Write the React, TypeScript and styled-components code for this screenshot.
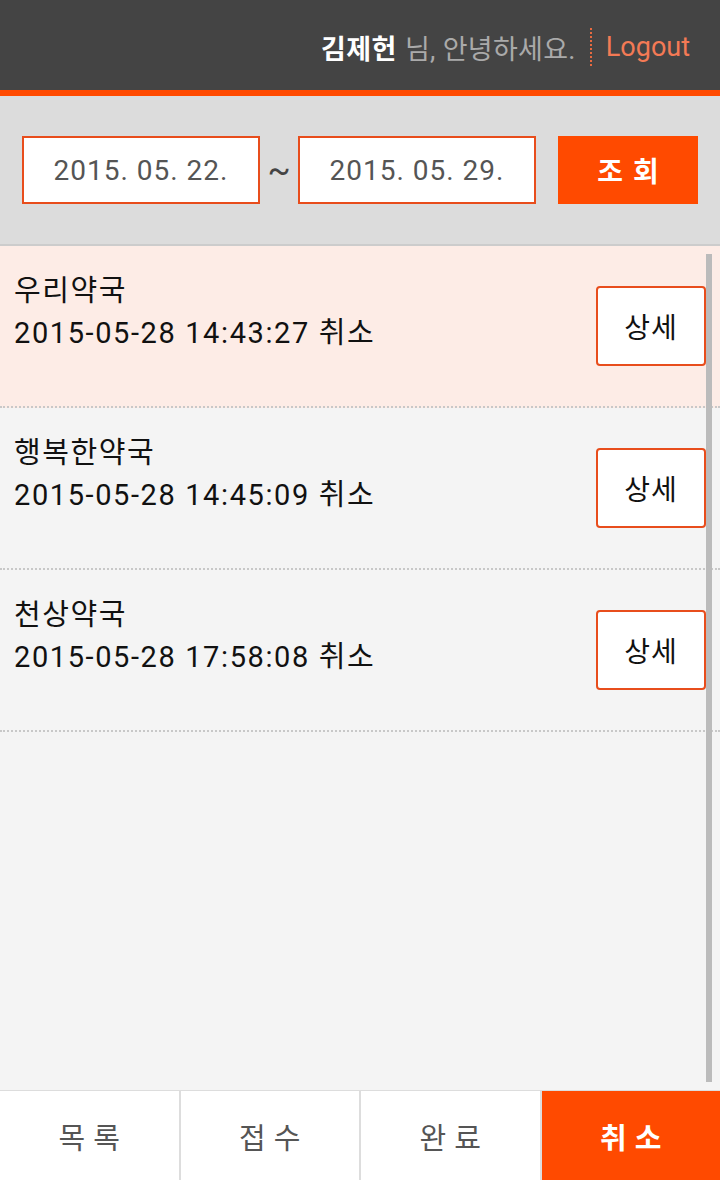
import styled, { createGlobalStyle } from 'styled-components'

const GlobalStyle = createGlobalStyle`
    html, body {
        margin: 0;
        padding: 0;
        background: #f4f4f4;
    }
    body {
        font-family: Roboto, "Noto Sans CJK KR", sans-serif;
    }
`

const ORANGE = '#ff4a00'

const Page = styled.div`
    display: flex;
    flex-direction: column;
    width: 720px;
    height: 1180px;
    overflow: hidden;
`

const Header = styled.header`
    box-sizing: border-box;
    display: flex;
    align-items: center;
    justify-content: flex-end;
    height: 90px;
    padding: 4px 30px 0 0;
    background: #444;
    border-bottom: 6px solid ${ORANGE};
    font-size: 27px;
    height: 96px;
`

const UserName = styled.b`
    color: #fff;
    font-weight: 700;
    letter-spacing: 0.5px;
`

const Greeting = styled.span`
    color: #aaa;
    margin-left: 8px;
    letter-spacing: 0.3px;
`

const Divider = styled.span`
    width: 0;
    height: 38px;
    margin: 0 14px;
    border-left: 2px dotted #e86a40;
`

const Logout = styled.a`
    color: #f47a55;
    font-size: 27px;
    text-decoration: none;
`

const SearchBar = styled.div`
    display: flex;
    align-items: center;
    padding: 40px 22px;
    background: #dcdcdc;
    border-bottom: 2px solid #ccc;
`

const DateInput = styled.div`
    box-sizing: border-box;
    display: flex;
    align-items: center;
    justify-content: center;
    width: 238px;
    height: 68px;
    background: #fff;
    border: 2px solid #e84d1c;
    color: #555;
    font-size: 28px;
    letter-spacing: 1px;
`

const Tilde = styled.span`
    width: 38px;
    text-align: center;
    color: #444;
    font-size: 34px;
`

const SearchButton = styled.button`
    width: 140px;
    height: 68px;
    margin-left: 22px;
    border: none;
    background: ${ORANGE};
    color: #fff;
    font-family: inherit;
    font-size: 28px;
    font-weight: 700;
    letter-spacing: 10px;
    text-indent: 10px;
`

const List = styled.div`
    position: relative;
    flex: 1;
    background: #f4f4f4;
`

const Row = styled.div<{ $active?: boolean }>`
    display: flex;
    align-items: center;
    justify-content: space-between;
    height: 160px;
    padding: 0 14px;
    background: ${p => (p.$active ? '#fdece6' : '#f4f4f4')};
    border-bottom: 2px dotted #c8c8c8;
`

const Info = styled.div`
    align-self: flex-start;
    padding-top: 24px;
    color: #111;
    font-size: 29px;
    line-height: 42px;
    letter-spacing: 1.6px;
`

const DetailButton = styled.button`
    box-sizing: border-box;
    width: 110px;
    height: 80px;
    background: #fff;
    border: 2px solid #e84d1c;
    border-radius: 4px;
    color: #111;
    font-family: inherit;
    font-size: 28px;
    letter-spacing: 1px;
`

const Scrollbar = styled.div`
    position: absolute;
    top: 8px;
    bottom: 8px;
    right: 8px;
    width: 6px;
    background: #bbb;
`

const TabBar = styled.nav`
    display: flex;
    height: 89px;
    border-top: 1px solid #ddd;
    background: #fff;
`

const Tab = styled.div<{ $active?: boolean }>`
    flex: 1;
    display: flex;
    align-items: center;
    justify-content: center;
    border-left: 2px solid #ddd;
    background: ${p => (p.$active ? ORANGE : '#fff')};
    color: ${p => (p.$active ? '#fff' : '#555')};
    font-size: 29px;
    font-weight: ${p => (p.$active ? 700 : 400)};
    letter-spacing: 8px;
    text-indent: 8px;
    &:first-child {
        border-left: none;
    }
`

const items = [
    { name: '우리약국', time: '2015-05-28 14:43:27 취소' },
    { name: '행복한약국', time: '2015-05-28 14:45:09 취소' },
    { name: '천상약국', time: '2015-05-28 17:58:08 취소' },
]

const tabs = ['목록', '접수', '완료', '취소']

const App = () => {
    return (
        <Page>
            <GlobalStyle />
            <Header>
                <UserName>김제헌</UserName>
                <Greeting>님, 안녕하세요.</Greeting>
                <Divider />
                <Logout>Logout</Logout>
            </Header>
            <SearchBar>
                <DateInput>2015. 05. 22.</DateInput>
                <Tilde>~</Tilde>
                <DateInput>2015. 05. 29.</DateInput>
                <SearchButton>조회</SearchButton>
            </SearchBar>
            <List>
                {items.map((item, i) => (
                    <Row key={item.name} $active={i === 0}>
                        <Info>
                            <div>{item.name}</div>
                            <div>{item.time}</div>
                        </Info>
                        <DetailButton>상세</DetailButton>
                    </Row>
                ))}
                <Scrollbar />
            </List>
            <TabBar>
                {tabs.map((t, i) => (
                    <Tab key={t} $active={i === 3}>{t}</Tab>
                ))}
            </TabBar>
        </Page>
    )
}

export default App
